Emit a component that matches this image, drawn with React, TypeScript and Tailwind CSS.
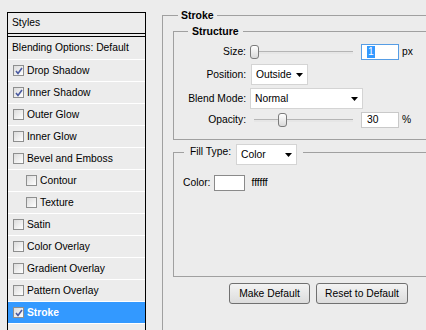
import React from 'react'

const font = "font-['Liberation_Sans',Arial,sans-serif]"

const Check = ({ checked }: { checked: boolean }) => (
    <span className="flex h-[11px] w-[11px] shrink-0 items-center justify-center border border-[#8e8f8f] bg-gradient-to-br from-[#dcdcdc] to-white">
        {checked && (
            <svg width="8" height="8" viewBox="0 0 8 8">
                <path d="M1 4 L3 6.5 L7 1" fill="none" stroke="#4a5aa0" strokeWidth="1.6" />
            </svg>
        )}
    </span>
)

const styleRows = [
    { label: 'Drop Shadow', checked: true },
    { label: 'Inner Shadow', checked: true },
    { label: 'Outer Glow' },
    { label: 'Inner Glow' },
    { label: 'Bevel and Emboss' },
    { label: 'Contour', sub: true },
    { label: 'Texture', sub: true },
    { label: 'Satin' },
    { label: 'Color Overlay' },
    { label: 'Gradient Overlay' },
    { label: 'Pattern Overlay' },
    { label: 'Stroke', checked: true, active: true },
    { label: '' },
]

const Arrow = () => (
    <svg width="7" height="4" viewBox="0 0 7 4" className="shrink-0">
        <polygon points="0,0 7,0 3.5,4" fill="#000" />
    </svg>
)

const Select = ({ value, className }: { value: string; className: string }) => (
    <div className={`flex h-[21px] items-center justify-between border border-[#d4d4d4] bg-white pl-[4px] pr-[4px] ${className}`}>
        <span className="pt-[1px]">{value}</span>
        <Arrow />
    </div>
)

const Slider = ({ pos, className }: { pos: number; className: string }) => (
    <div className={`relative h-[16px] ${className}`}>
        <div className="absolute left-0 right-0 top-[7px] h-[3px] border-t border-[#b5b5b5] bg-[#e6e6e6]" />
        <div
            className="absolute top-[1px] h-[14px] w-[9px] rounded-[3px] border border-[#7b7b7b] bg-gradient-to-b from-white to-[#d9d9d9]"
            style={{ left: pos }}
        />
    </div>
)

const Label = ({ children }: { children: React.ReactNode }) => (
    <span className="w-[76px] shrink-0 pr-[4px] text-right">{children}</span>
)

export default function App() {
    return (
        <div className={`flex h-[330px] w-[426px] overflow-hidden bg-[#ececec] text-[10.3px] leading-[12px] text-black ${font}`}>
            {/* styles list */}
            <div className="ml-[7px] mt-[12px] h-[330px] w-[139px] shrink-0 border-x border-t border-black">
                <div className="flex h-[21px] items-center border-b border-black pl-[4px]">Styles</div>
                <div className="h-[2px]" />
                <div className="border-t border-black">
                    <div className="flex h-[23px] items-center border-b border-white pl-[4px]">Blending Options: Default</div>
                    {styleRows.map((r, i) => (
                        <div
                            key={i}
                            className={`flex h-[22px] items-center gap-[3px] border-b border-white ${r.sub ? 'pl-[18px]' : 'pl-[5px]'} ${r.active ? 'bg-[#3399ff] font-bold text-white' : ''}`}
                        >
                            {r.label && <Check checked={!!r.checked} />}
                            <span>{r.label}</span>
                        </div>
                    ))}
                </div>
            </div>

            {/* stroke panel */}
            <fieldset className="ml-[16px] mt-[9px] h-[400px] w-[300px] shrink-0 border-l border-t border-[#a0a0a0] p-0">
                <legend className="ml-[15px] px-[3px] text-[10.5px] font-bold">Stroke</legend>
                <div className="pl-[10px]">
                    <fieldset className="mt-[4px] border-y border-l border-[#a0a0a0] p-0">
                        <legend className="ml-[14px] px-[4px] text-[10.5px] font-bold">Structure</legend>
                        <div className="flex flex-col pb-[11px] pt-[7px]">
                            <div className="flex h-[16px] items-center">
                                <Label>Size:</Label>
                                <Slider pos={0} className="w-[103px]" />
                                <div className="ml-[8px] flex h-[16px] w-[38px] items-center border border-[#569de5] bg-white pl-[5px]">
                                    <span className="bg-[#3399ff] px-[1px] text-white">1</span>
                                </div>
                                <span className="ml-[3px]">px</span>
                            </div>
                            <div className="mt-[4px] flex h-[21px] items-center">
                                <Label>Position:</Label>
                                <Select value="Outside" className="ml-[1px] w-[57px]" />
                            </div>
                            <div className="mt-[3px] flex h-[21px] items-center">
                                <Label>Blend Mode:</Label>
                                <Select value="Normal" className="w-[113px]" />
                            </div>
                            <div className="mt-[3px] flex h-[16px] items-center">
                                <Label>Opacity:</Label>
                                <Slider pos={24} className="ml-[4px] w-[99px]" />
                                <div className="ml-[8px] flex h-[16px] w-[38px] items-center border border-[#c9c9c9] bg-white pl-[5px]">
                                    30
                                </div>
                                <span className="ml-[3px]">%</span>
                            </div>
                        </div>
                    </fieldset>

                    <fieldset className="mt-[4px] h-[133px] border-y border-l border-[#a0a0a0] p-0">
                        <legend className="ml-[10px] px-[6px]">
                            <div className="flex h-[16px] items-center">
                                <span>Fill Type:</span>
                                <Select value="Color" className="ml-[5px] mt-[5px] w-[61px]" />
                            </div>
                        </legend>
                        <div className="mt-[15px] flex items-center pl-[9px]">
                            <span>Color:</span>
                            <span className="ml-[4px] h-[16px] w-[31px] border border-[#8a8a8a] bg-white" />
                            <span className="ml-[6px]">ffffff</span>
                        </div>
                    </fieldset>

                    <div className="mt-[6px] flex gap-[6px] pl-[56px]">
                        <button className="h-[21px] w-[81px] rounded-[3px] border border-[#707070] bg-gradient-to-b from-[#f3f3f3] to-[#dcdcdc]">
                            Make Default
                        </button>
                        <button className="h-[21px] w-[92px] rounded-[3px] border border-[#707070] bg-gradient-to-b from-[#f3f3f3] to-[#dcdcdc]">
                            Reset to Default
                        </button>
                    </div>
                </div>
            </fieldset>
        </div>
    )
}
